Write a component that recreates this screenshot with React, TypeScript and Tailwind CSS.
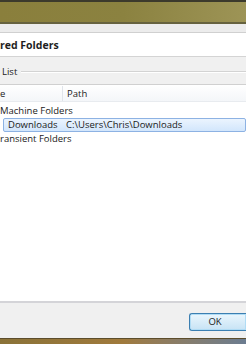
import React from "react";

const font = { fontFamily: '"Open Sans", "Liberation Sans", sans-serif' };

function App() {
  return (
    <div className="w-[246px] h-[344px] overflow-hidden flex flex-col bg-[#f0f0f0] text-[9.5px] leading-none text-[#1a1a1a]" style={font}>
      <div className="h-[2px] bg-[#3c3a2c]" />
      <div className="h-[20px] bg-gradient-to-r from-[#8a7f3c] via-[#8b8240] to-[#9d9456]" />
      <div className="h-[2px] bg-[#66623f]" />
      <div className="h-[8px] bg-[#ececec]" />
      <div className="h-[1px] bg-[#d0d0d0]" />
      <div className="h-[23px] bg-white flex items-center">
        <h1 className="text-[10.5px] font-bold text-[#1e1e1e] pt-[2px]">red Folders</h1>
      </div>
      <div className="h-[1px] bg-[#d4d4d4]" />
      <div className="flex-1 flex flex-col bg-[#f0f0f0]">
        <div className="h-[8px]" />
        <div className="h-[14px] flex items-center">
          <span className="pl-[2px] text-[#222]">List</span>
          <div className="flex-1 ml-[4px] h-[2px] border-t border-[#d3d3d3] bg-white" />
        </div>
        <div className="h-[5px]" />
        <div className="h-[217px] bg-white border-t border-[#d0d0d0] flex flex-col">
          <div className="h-[17px] pt-[1px] flex items-stretch bg-gradient-to-b from-white to-[#f4f6f9] border-b border-[#e8ebef]">
            <div className="w-[63px] border-r border-[#e0e4ea] flex items-center">
              <span>e</span>
            </div>
            <div className="flex items-center pl-[4px]">Path</div>
          </div>
          <div className="h-[15px] mt-[1px] flex items-center">
            <span>Machine Folders</span>
          </div>
          <div className="h-[14px] ml-[3px] flex items-center rounded-[2px] border border-[#8db2e3] bg-gradient-to-b from-[#ebf4fe] to-[#d2e6fc]">
            <span className="w-[62px] pl-[4px]">Downloads</span>
            <span>C:\Users\Chris\Downloads</span>
          </div>
          <div className="h-[14px] flex items-center">
            <span>ransient Folders</span>
          </div>
        </div>
        <div className="h-[2px] bg-[#d4d4d8]" />
        <div className="flex-1 flex items-center justify-end pt-[2px]">
          <button className="w-[57px] h-[18px] pr-[6px] rounded-l-[3px] border border-r-0 border-[#3c7fb1] bg-gradient-to-b from-[#eaf6fd] to-[#c7e3f5] shadow-[inset_0_0_0_1px_#b0dcf5] text-[9.5px] leading-none">
            OK
          </button>
        </div>
      </div>
      <div className="h-[6px] bg-gradient-to-r from-[#8a7238] via-[#a07a3c] to-[#6b7c90] border-t border-[#5c4d2c]" />
    </div>
  );
}

export default App;
